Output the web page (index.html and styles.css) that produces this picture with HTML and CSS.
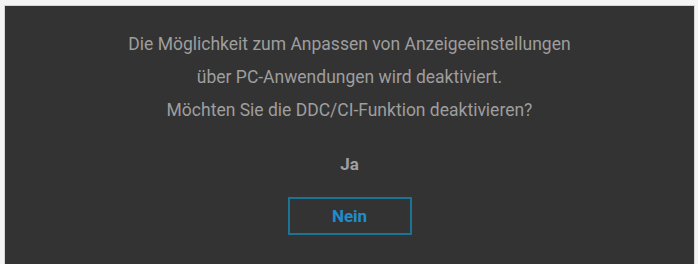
FILE: index.html
```html
<!DOCTYPE html>
<html lang="de">
<head>
  <meta charset="UTF-8" />
  <title>DDC/CI</title>
  <link rel="stylesheet" href="styles.css">
</head>
<body>
  <div class="panel">
    <div class="message">
      <p>Die Möglichkeit zum Anpassen von Anzeigeeinstellungen</p>
      <p>über PC-Anwendungen wird deaktiviert.</p>
      <p>Möchten Sie die DDC/CI-Funktion deaktivieren?</p>
    </div>
    <div class="choices">
      <div class="choice">Ja</div>
      <div class="choice selected">Nein</div>
    </div>
  </div>
</body>
</html>
```

FILE: styles.css
```css
html, body {
  height: 100%;
}

body {
  margin: 0;
  padding: 6px 4px 0 5px;
  box-sizing: border-box;
  background-color: #f4f4f4;
  font-family: Roboto, "Liberation Sans", sans-serif;
}

.panel {
  height: 100%;
  background-color: #333333;
  box-shadow: 0 0 0 1px #d6d6d6;
  padding-top: 22px;
  box-sizing: border-box;
  display: flex;
  flex-direction: column;
  align-items: center;
}

.message p {
  margin: 0;
  text-align: center;
  color: #9e9e9e;
  font-size: 17.5px;
  line-height: 33px;
}

.choices {
  display: flex;
  flex-direction: column;
  align-items: center;
  margin-top: 18px;
}

.choice {
  width: 124px;
  height: 38px;
  line-height: 38px;
  text-align: center;
  color: #a0a0a0;
  font-size: 17px;
  font-weight: bold;
  box-sizing: border-box;
}

.choice + .choice {
  margin-top: 14px;
}

.selected {
  border: 2px solid #1b7496;
  line-height: 34px;
  color: #1f8dcc;
}
```
